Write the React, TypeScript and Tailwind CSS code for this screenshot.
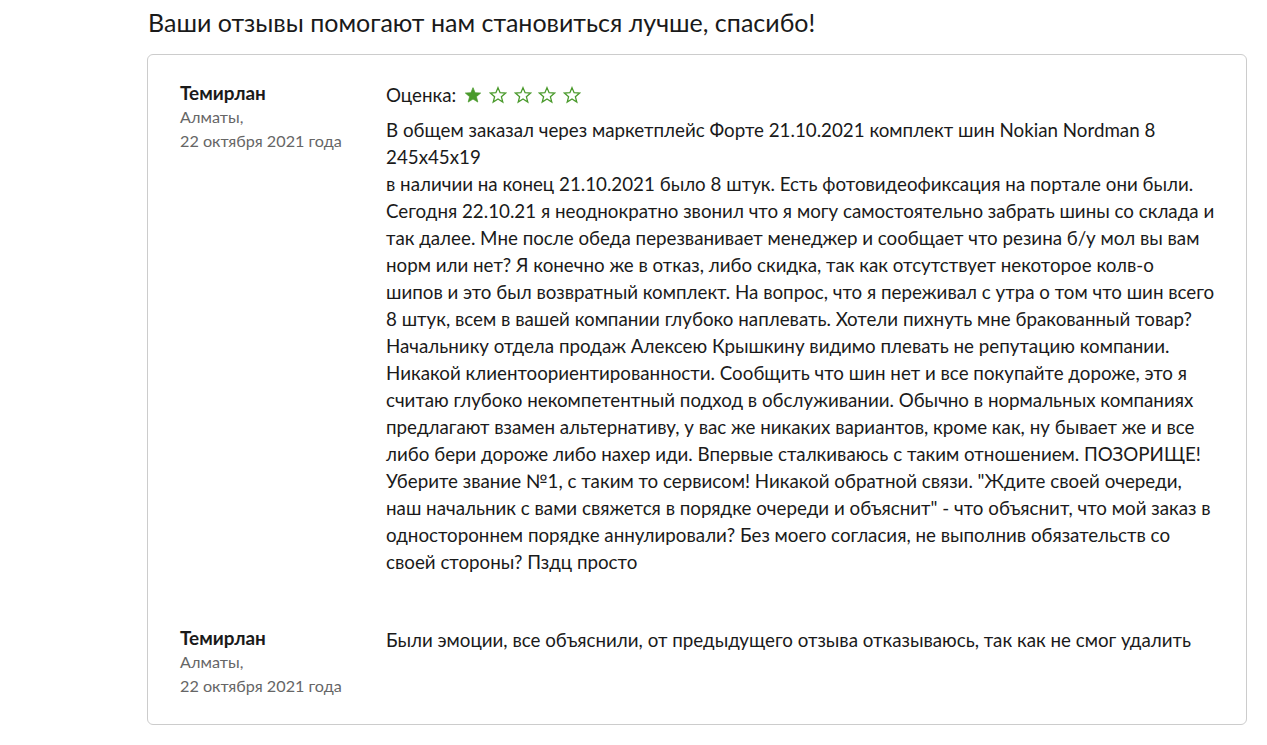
import React from "react";

const text1 = [
  "В общем заказал через маркетплейс Форте 21.10.2021 комплект шин Nokian Nordman 8 245x45x19",
  "в наличии на конец 21.10.2021 было 8 штук. Есть фотовидеофиксация на портале они были. Сегодня 22.10.21 я неоднократно звонил что я могу самостоятельно забрать шины со склада и так далее. Мне после обеда перезванивает менеджер и сообщает что резина б/у мол вы вам норм или нет? Я конечно же в отказ, либо скидка, так как отсутствует некоторое колв-о шипов и это был возвратный комплект. На вопрос, что я переживал с утра о том что шин всего 8 штук, всем в вашей компании глубоко наплевать. Хотели пихнуть мне бракованный товар? Начальнику отдела продаж Алексею Крышкину видимо плевать не репутацию компании. Никакой клиентоориентированности. Сообщить что шин нет и все покупайте дороже, это я считаю глубоко некомпетентный подход в обслуживании. Обычно в нормальных компаниях предлагают взамен альтернативу, у вас же никаких вариантов, кроме как, ну бывает же и все либо бери дороже либо нахер иди. Впервые сталкиваюсь с таким отношением. ПОЗОРИЩЕ! Уберите звание №1, с таким то сервисом! Никакой обратной связи. \"Ждите своей очереди, наш начальник с вами свяжется в порядке очереди и объяснит\" - что объяснит, что мой заказ в одностороннем порядке аннулировали? Без моего согласия, не выполнив обязательств со своей стороны? Пздц просто",
];

const STAR = "12,2.2 14.8,9 22.2,9.4 16.5,14.2 18.4,21.4 12,17.4 5.6,21.4 7.5,14.2 1.8,9.4 9.2,9";

function Star({ filled }: { filled: boolean }) {
  return (
    <svg width="18" height="18" viewBox="0 0 24 24" className="block">
      <polygon
        points={STAR}
        fill={filled ? "#4a9a2c" : "none"}
        stroke="#4a9a2c"
        strokeWidth={filled ? 1 : 1.7}
        strokeLinejoin="miter"
      />
    </svg>
  );
}

function Author() {
  return (
    <div className="w-[206px] shrink-0">
      <div className="text-[18.9px] leading-[24px] font-bold text-[#1a1a1a]">Темирлан</div>
      <div className="text-[16.2px] leading-[23.5px] text-[#666666]">Алматы,</div>
      <div className="text-[16.2px] leading-[23.5px] text-[#666666]">22 октября 2021 года</div>
    </div>
  );
}

export default function App() {
  return (
    <div
      className="min-h-[745px] bg-white px-[147px] text-[#1a1a1a]"
      style={{ fontFamily: "Lato, 'Noto Sans', sans-serif" }}
    >
      <h1 className="pt-[7px] pl-[1px] text-[25px] leading-[30px] font-normal text-[#1a1a1a]">
        Ваши отзывы помогают нам становиться лучше, спасибо!
      </h1>
      <div className="mt-[17px] w-[1100px] rounded-[6px] border border-[#cccccc] pl-[32px] pr-[31px] pt-[26px] pb-[27px]">
        <div className="flex">
          <Author />
          <div className="flex-1 text-[18.75px] leading-[27px]">
            <div className="flex items-center">
              <span>Оценка:</span>
              <span className="ml-[8px] flex gap-[6.7px] pt-[1px]">
                <Star filled />
                <Star filled={false} />
                <Star filled={false} />
                <Star filled={false} />
                <Star filled={false} />
              </span>
            </div>
            <div className="mt-[8px]">
              {text1.map((p, i) => (
                <p key={i}>{p}</p>
              ))}
            </div>
          </div>
        </div>
        <div className="mt-[51px] flex">
          <Author />
          <div className="flex-1 text-[18.75px] leading-[27px]">
            Были эмоции, все объяснили, от предыдущего отзыва отказываюсь, так как не смог удалить
          </div>
        </div>
      </div>
    </div>
  );
}
